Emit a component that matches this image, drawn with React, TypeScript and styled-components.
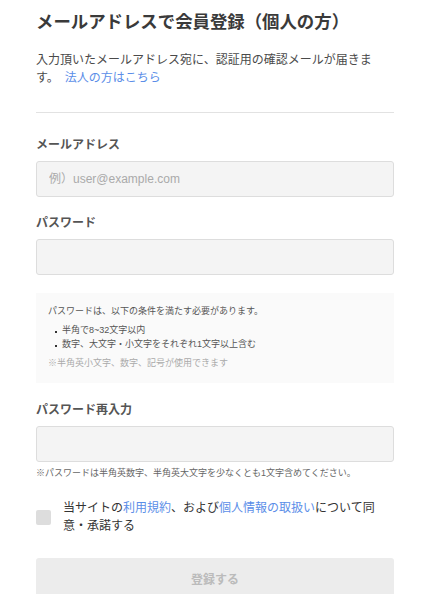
import React, { useState } from "react";
import styled, { createGlobalStyle } from "styled-components";

const GlobalStyle = createGlobalStyle`
    html, body {
        margin: 0;
        padding: 0;
        background: #ffffff;
    }
    body {
        font-family: "Liberation Sans", "Noto Sans CJK JP", sans-serif;
        color: #444444;
    }
`;

const Page = styled.div`
    padding: 0 37px 0 36px;
    display: flex;
    flex-direction: column;
`;

const Title = styled.h1`
    margin: 9px 0 0;
    font-size: 17.4px;
    line-height: 26px;
    font-weight: 700;
    color: #3a3a3a;
`;

const Lead = styled.p`
    margin: 16px 0 0;
    max-width: 344px;
    font-size: 12px;
    line-height: 18px;
    color: #4a4a4a;
`;

const Link = styled.a<{ $gap?: boolean }>`
    color: #5b8ee8;
    text-decoration: none;
    margin-left: ${(p) => (p.$gap ? "6px" : "0")};
`;

const Divider = styled.hr`
    margin: 25px 0 0;
    border: none;
    border-top: 1px solid #e2e2e2;
`;

const Field = styled.div<{ $top: number }>`
    display: flex;
    flex-direction: column;
    margin-top: ${(p) => p.$top}px;
`;

const Label = styled.label`
    font-size: 12px;
    line-height: 18px;
    font-weight: 700;
    color: #555555;
    margin-bottom: 7px;
`;

const Input = styled.input`
    box-sizing: border-box;
    height: 36px;
    width: 100%;
    padding: 0 12px;
    background: #f4f4f4;
    border: 1px solid #dddddd;
    border-radius: 3px;
    font-family: "Liberation Sans", "Noto Sans CJK JP", sans-serif;
    font-size: 12px;
    color: #333333;
    outline: none;
    &::placeholder {
        color: #aaaaaa;
    }
`;

const RuleBox = styled.div`
    margin-top: 18px;
    background: #fafafa;
    padding: 11px 12px 13px;
    font-size: 9px;
    line-height: 14px;
    color: #555555;
`;

const RuleList = styled.ul`
    list-style: none;
    margin: 5px 0 0;
    padding: 0 0 0 7px;
`;

const RuleItem = styled.li`
    display: flex;
    align-items: center;
    line-height: 14px;
    &::before {
        content: "";
        width: 2px;
        height: 2px;
        background: #333333;
        margin: 3px 5px 0 0;
    }
`;

const RuleNote = styled.div`
    margin-top: 5px;
    color: #aaaaaa;
`;

const Hint = styled.div`
    margin-top: 4px;
    font-size: 9px;
    line-height: 14px;
    color: #666666;
`;

const AgreeRow = styled.label`
    margin-top: 20px;
    display: flex;
    align-items: center;
    gap: 12px;
    cursor: pointer;
`;

const CheckBox = styled.span<{ $checked: boolean }>`
    flex: none;
    width: 15px;
    height: 15px;
    border-radius: 2px;
    background: ${(p) => (p.$checked ? "#5b8ee8" : "#dddddd")};
`;

const AgreeText = styled.span`
    font-size: 12px;
    line-height: 17.5px;
    color: #333333;
`;

const Submit = styled.button<{ $enabled: boolean }>`
    margin-top: 23px;
    height: 40px;
    width: 100%;
    border: none;
    border-radius: 3px;
    background: ${(p) => (p.$enabled ? "#5b8ee8" : "#ececec")};
    color: ${(p) => (p.$enabled ? "#ffffff" : "#bbbbbb")};
    font-family: "Liberation Sans", "Noto Sans CJK JP", sans-serif;
    font-size: 12px;
    font-weight: 700;
`;

export default function App() {
    const [agreed, setAgreed] = useState(false);

    return (
        <Page>
            <GlobalStyle />
            <Title>メールアドレスで会員登録（個人の方）</Title>
            <Lead>
                入力頂いたメールアドレス宛に、認証用の確認メールが届きます。
                <Link $gap href="#">法人の方はこちら</Link>
            </Lead>
            <Divider />

            <Field $top={23}>
                <Label>メールアドレス</Label>
                <Input type="email" placeholder="例）user@example.com" />
            </Field>

            <Field $top={17}>
                <Label>パスワード</Label>
                <Input type="password" />
            </Field>

            <RuleBox>
                パスワードは、以下の条件を満たす必要があります。
                <RuleList>
                    <RuleItem>半角で8~32文字以内</RuleItem>
                    <RuleItem>数字、大文字・小文字をそれぞれ1文字以上含む</RuleItem>
                </RuleList>
                <RuleNote>※半角英小文字、数字、記号が使用できます</RuleNote>
            </RuleBox>

            <Field $top={18}>
                <Label>パスワード再入力</Label>
                <Input type="password" />
            </Field>
            <Hint>※パスワードは半角英数字、半角英大文字を少なくとも1文字含めてください。</Hint>

            <AgreeRow onClick={() => setAgreed(!agreed)}>
                <CheckBox $checked={agreed} />
                <AgreeText>
                    当サイトの<Link href="#">利用規約</Link>、および<Link href="#">個人情報の取扱い</Link>について同意・承諾する
                </AgreeText>
            </AgreeRow>

            <Submit $enabled={agreed} disabled={!agreed}>登録する</Submit>
        </Page>
    );
}
